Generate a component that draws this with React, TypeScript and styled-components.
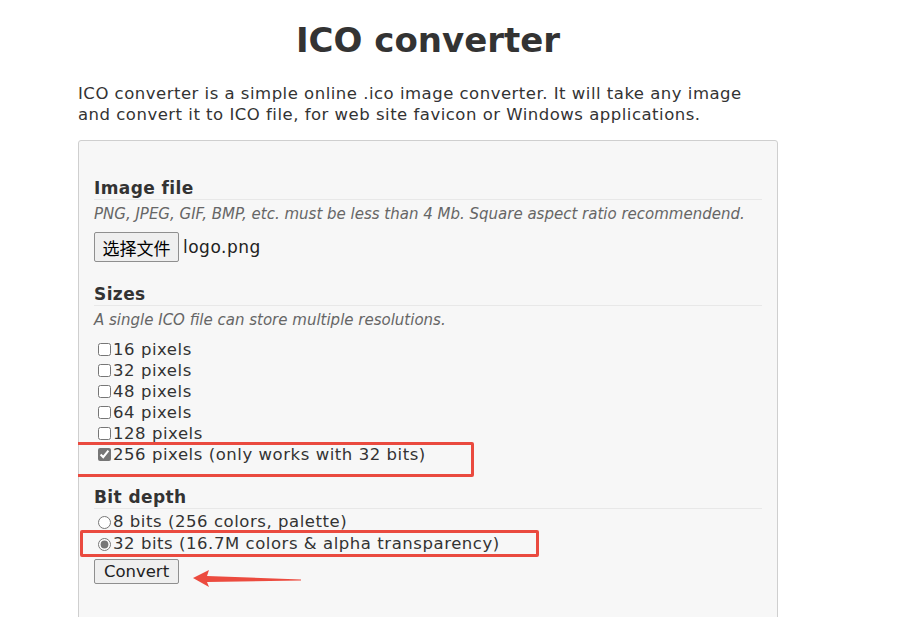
import React from "react";
import styled, { createGlobalStyle } from "styled-components";

const GlobalStyle = createGlobalStyle`
  html, body {
    margin: 0;
    padding: 0;
    background: #fff;
  }
  body {
    font-family: "DejaVu Sans", Verdana, sans-serif;
    color: #333;
  }
`;

const sizes = [16, 32, 48, 64, 128];

export default function App() {
  return (
    <>
      <GlobalStyle />
      <Page>
        <Title>ICO converter</Title>
        <Intro>
          ICO converter is a simple online .ico image converter. It will take any image
          and convert it to ICO file, for web site favicon or Windows applications.
        </Intro>
        <FormBox>
          <Section>
            <Heading>Image file</Heading>
            <Hint>PNG, JPEG, GIF, BMP, etc. must be less than 4 Mb. Square aspect ratio recommendend.</Hint>
            <FileRow>
              <FileButton type="button">选择文件</FileButton>
              <FileName>logo.png</FileName>
            </FileRow>
          </Section>

          <Section>
            <Heading>Sizes</Heading>
            <Hint>A single ICO file can store multiple resolutions.</Hint>
            <OptionList>
              {sizes.map((s) => (
                <Option key={s}>
                  <input type="checkbox" />
                  {s} pixels
                </Option>
              ))}
              <Option>
                <input type="checkbox" defaultChecked />
                256 pixels (only works with 32 bits)
              </Option>
            </OptionList>
          </Section>

          <Section>
            <Heading>Bit depth</Heading>
            <OptionList $tight>
              <Option $tall>
                <input type="radio" name="bits" />
                8 bits (256 colors, palette)
              </Option>
              <Option $tall>
                <input type="radio" name="bits" defaultChecked />
                32 bits (16.7M colors &amp; alpha transparency)
              </Option>
            </OptionList>
            <ConvertButton type="button">Convert</ConvertButton>
          </Section>
        </FormBox>

        <Marker $left={63} $top={442} $width={411} $height={35} />
        <Marker $left={80} $top={530} $width={459} $height={27} />
        <Arrow viewBox="0 0 110 20" width="110" height="20">
          <path d="M0 9 L16 1 L14 7 L108 10.5 L108 11.5 L14 13 L16 18 Z" fill="#ec4b3f" />
        </Arrow>
      </Page>
    </>
  );
}

const Page = styled.div`
  position: relative;
  width: 700px;
  margin-left: 78px;
  height: 617px;
  overflow: hidden;
`;

const Title = styled.h1`
  margin: 0;
  padding-top: 19px;
  text-align: center;
  font-size: 34px;
  line-height: 42px;
  font-weight: bold;
  color: #333;
`;

const Intro = styled.p`
  margin: 22px 0 15px;
  font-size: 16.5px;
  letter-spacing: 0.5px;
  line-height: 21px;
  color: #333;
`;

const FormBox = styled.div`
  background: #f7f7f7;
  border: 1px solid #cfcfcf;
  border-radius: 3px;
  padding: 37px 15px 40px 15px;
`;

const Section = styled.div`
  display: flex;
  flex-direction: column;
  align-items: flex-start;
  margin-bottom: 22px;
`;

const Heading = styled.h3`
  align-self: stretch;
  margin: 0;
  font-size: 17px;
  letter-spacing: 0.4px;
  line-height: 21px;
  font-weight: bold;
  color: #333;
  border-bottom: 1px solid #e8e8e8;
`;

const Hint = styled.div`
  margin-top: 5px;
  font-size: 15px;
  line-height: 19px;
  font-style: italic;
  color: #666;
`;

const FileRow = styled.div`
  display: flex;
  align-items: center;
  gap: 4px;
  margin-top: 8px;
`;

const FileButton = styled.button`
  height: 30px;
  width: 85px;
  padding: 0;
  font-family: "Noto Sans CJK SC", sans-serif;
  font-size: 17px;
  color: #000;
  background: #efefef;
  border: 1px solid #8f8f8f;
  border-radius: 2px;
`;

const FileName = styled.span`
  font-size: 17px;
  letter-spacing: 0.5px;
  color: #222;
`;

const OptionList = styled.div<{ $tight?: boolean }>`
  display: flex;
  flex-direction: column;
  margin-top: ${(p) => (p.$tight ? "2px" : "9px")};
`;

const Option = styled.label<{ $tall?: boolean }>`
  display: flex;
  align-items: center;
  font-size: 16.5px;
  letter-spacing: 0.55px;
  line-height: ${(p) => (p.$tall ? "22px" : "21px")};
  color: #333;

  input {
    margin: 0 2px 0 4px;
    width: 13px;
    height: 13px;
    accent-color: #767676;
  }
`;

const ConvertButton = styled.button`
  margin-top: 4px;
  height: 25px;
  width: 85px;
  padding: 0;
  font-family: "DejaVu Sans", Verdana, sans-serif;
  font-size: 16.5px;
  color: #222;
  background: #efefef;
  border: 1px solid #8f8f8f;
  border-radius: 2px;
`;

const Marker = styled.div<{ $left: number; $top: number; $width: number; $height: number }>`
  position: absolute;
  left: ${(p) => p.$left - 78}px;
  top: ${(p) => p.$top}px;
  width: ${(p) => p.$width}px;
  height: ${(p) => p.$height}px;
  box-sizing: border-box;
  border: 3px solid #ea4a3f;
  border-radius: 2px;
`;

const Arrow = styled.svg`
  position: absolute;
  left: ${193 - 78}px;
  top: 569px;
`;
